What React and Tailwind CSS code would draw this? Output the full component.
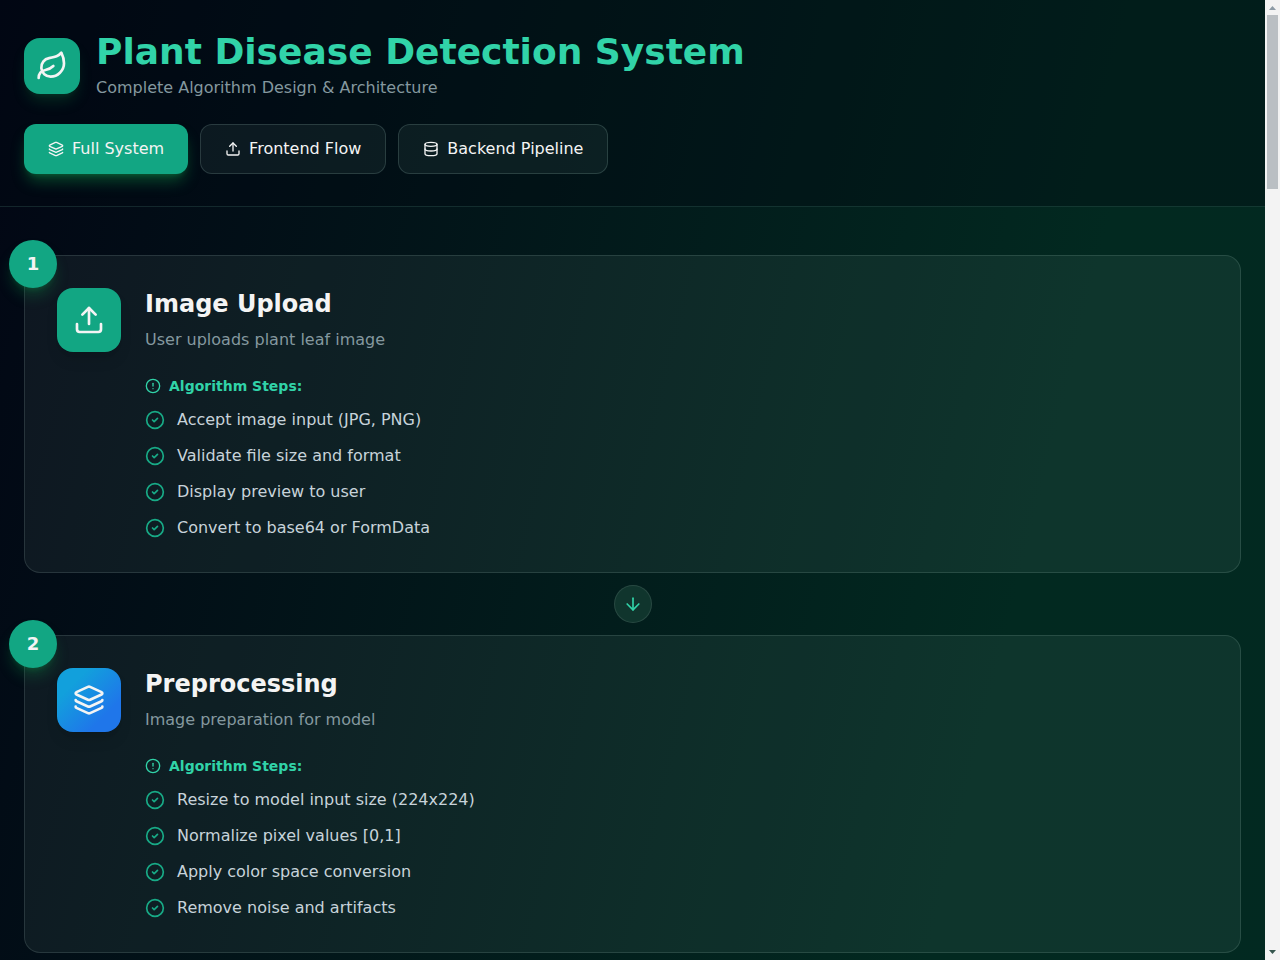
import { ArrowDown, CircleAlert, CircleCheck, Database, Layers, Leaf, Upload } from 'lucide-react';

const tabs = [
    { id: 'full', label: 'Full System', icon: Layers },
    { id: 'frontend', label: 'Frontend Flow', icon: Upload },
    { id: 'backend', label: 'Backend Pipeline', icon: Database },
];

const steps = [
    {
        title: 'Image Upload',
        description: 'User uploads plant leaf image',
        icon: Upload,
        color: 'bg-[#12a683]',
        algorithm: [
            'Accept image input (JPG, PNG)',
            'Validate file size and format',
            'Display preview to user',
            'Convert to base64 or FormData',
        ],
    },
    {
        title: 'Preprocessing',
        description: 'Image preparation for model',
        icon: Layers,
        color: 'bg-linear-to-br/srgb from-[#12a0dc] from-25% to-[#1f76ea] to-75%',
        algorithm: [
            'Resize to model input size (224x224)',
            'Normalize pixel values [0,1]',
            'Apply color space conversion',
            'Remove noise and artifacts',
        ],
    },
];

const StepCard = ({ step, number }) => {
    const Icon = step.icon;
    return (
        <div className="relative rounded-2xl border border-[#e0fff4]/12 bg-[#e0fff4]/[0.06] p-8">
            <div className="absolute -top-4 -left-4 flex h-12 w-12 items-center justify-center rounded-full bg-[#12a683] text-lg font-bold text-[#f4f4f4] shadow-lg shadow-[#12a650]/30">
                {number}
            </div>
            <div className="flex items-start gap-6">
                <div className={`flex h-16 w-16 shrink-0 items-center justify-center rounded-2xl shadow-lg ${step.color}`}>
                    <Icon className="h-8 w-8" />
                </div>
                <div className="flex-1">
                    <h3 className="mb-2 text-2xl font-bold">{step.title}</h3>
                    <p className="mb-6 text-[#84989f]">{step.description}</p>
                    <h4 className="mb-3 flex items-center gap-2 text-sm font-bold text-[#31d3a8]">
                        <CircleAlert className="h-4 w-4" />
                        Algorithm Steps:
                    </h4>
                    <ul className="space-y-3">
                        {step.algorithm.map((item) => (
                            <li key={item} className="flex items-start gap-3 text-[#c7d3da]">
                                <CircleCheck className="mt-0.5 h-5 w-5 shrink-0 text-[#18ab87]" />
                                <span>{item}</span>
                            </li>
                        ))}
                    </ul>
                </div>
            </div>
        </div>
    );
};

// Vertical scrollbar at the window edge
const Scrollbar = () => (
    <div className="flex h-[960px] w-[15px] flex-col items-center justify-between bg-[#f3f3f3]">
        <div className="flex flex-col items-center">
            <svg className="h-[15px] w-[15px]" viewBox="0 0 15 15">
                <path d="M4 10h7L7.5 6z" fill="#8d9ba6" />
            </svg>
            <div className="h-[174px] w-[11px] bg-[#babfc3]" />
        </div>
        <svg className="h-[15px] w-[15px]" viewBox="0 0 15 15">
            <path d="M4 5h7L7.5 9z" fill="#36574f" />
        </svg>
    </div>
);

export default function App() {
    return (
        <div className="flex h-[960px] w-[1280px] overflow-hidden font-['DejaVu_Sans',sans-serif] text-[#f4f4f4]">
            <div className="h-[5130px] w-[1265px] shrink-0 bg-[linear-gradient(to_bottom_right,#020614,#022920_46%,#022921_62%,#020617)]">
                <header className="border-b border-[#a0ffe0]/12 bg-[#000a12]/35 px-6 py-8">
                    <div className="mb-6 flex items-center gap-4">
                        <div className="flex h-14 w-14 items-center justify-center rounded-2xl bg-[#12a683] shadow-lg shadow-[#12a650]/20">
                            <Leaf className="h-8 w-8" />
                        </div>
                        <div>
                            <h1 className="text-4xl font-bold text-[#31d3a8]">Plant Disease Detection System</h1>
                            <p className="mt-1 text-[#84989f]">Complete Algorithm Design &amp; Architecture</p>
                        </div>
                    </div>
                    <nav className="flex gap-3">
                        {tabs.map((tab) => {
                            const Icon = tab.icon;
                            return (
                                <button
                                    key={tab.id}
                                    className={`flex items-center gap-2 rounded-xl px-6 py-3 ${
                                        tab.id === 'full'
                                            ? 'bg-[#12a683] shadow-lg shadow-[#12a650]/40'
                                            : 'border border-[#d0fff0]/15 bg-[#d0fff0]/[0.06]'
                                    }`}
                                >
                                    <Icon className="h-4 w-4" />
                                    {tab.label}
                                </button>
                            );
                        })}
                    </nav>
                </header>

                <main className="px-6 py-12">
                    {steps.map((step, index) => (
                        <div key={step.title}>
                            <StepCard step={step} number={index + 1} />
                            <div className="flex justify-center py-3">
                                <div className="rounded-full border border-white/10 bg-[#10352d] p-2">
                                    <ArrowDown className="h-5 w-5 text-[#31d3a8]" />
                                </div>
                            </div>
                        </div>
                    ))}
                </main>
            </div>
            <Scrollbar />
        </div>
    );
}
